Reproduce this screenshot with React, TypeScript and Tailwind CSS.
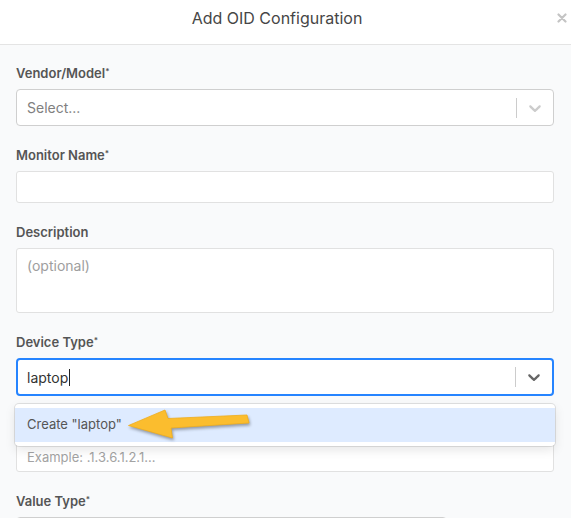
import React from 'react';

const Chevron: React.FC<{ color: string }> = ({ color }) => (
  <svg width="20" height="20" viewBox="0 0 20 20" fill={color} aria-hidden="true">
    <path d="M4.516 7.548c0.436-0.446 1.043-0.481 1.576 0l3.908 3.747 3.908-3.747c0.533-0.481 1.141-0.446 1.574 0 0.436 0.445 0.408 1.197 0 1.615-0.406 0.418-4.695 4.502-4.695 4.502-0.217 0.223-0.502 0.335-0.787 0.335s-0.57-0.112-0.789-0.335c0 0-4.287-4.084-4.695-4.502s-0.436-1.17 0-1.615z" />
  </svg>
);

const Label: React.FC<{ children: React.ReactNode; required?: boolean }> = ({ children, required }) => (
  <label className="block h-5 leading-5 text-[13px] font-semibold text-[#555555] mb-1.5">
    {children}
    {required && <sup className="text-[8px]">*</sup>}
  </label>
);

const App: React.FC = () => {
  return (
    <div className="relative w-[571px] h-[518px] overflow-hidden bg-[#f9fafb] font-['Inter',sans-serif]">
      {/* header */}
      <div className="flex items-center h-[45px] pb-[9px] bg-white border-b border-[#e4e4e4]">
        <h2 className="flex-1 text-center text-[16px] text-[#464646]">Add OID Configuration</h2>
        <button className="w-[15px] h-[15px] mr-[2px] flex items-center justify-center">
          <svg width="10" height="10" viewBox="0 0 10 10" stroke="#c4c4c4" strokeWidth="2.2" strokeLinecap="round">
            <path d="M1.5 1.5l7 7M8.5 1.5l-7 7" />
          </svg>
        </button>
      </div>

      <div className="pl-4 pr-[17px] pt-[18px]">
        <div className="mb-[19px]">
          <Label required>Vendor/Model</Label>
          <div className="flex items-center h-[37px] bg-white border border-[#cfcfcf] rounded">
            <div className="flex-1 pl-[10px] text-[14px] text-[#808080]">Select...</div>
            <span className="w-px h-5 bg-[#cccccc]" />
            <div className="px-2 flex items-center">
              <Chevron color="#cccccc" />
            </div>
          </div>
        </div>

        <div className="mb-[19px]">
          <Label required>Monitor Name</Label>
          <input
            readOnly
            className="block w-full h-[32px] bg-white border border-[#e1e1e1] rounded-[3px] px-[10px] text-[14px] outline-none"
          />
        </div>

        <div className="mb-[19px]">
          <Label>Description</Label>
          <textarea
            readOnly
            placeholder="(optional)"
            className="block w-full h-[65px] resize-none bg-white border border-[#e1e1e1] rounded-[3px] px-[10px] pt-[6px] text-[14px] outline-none placeholder:text-[#9e9e9e]"
          />
        </div>

        <div className="mb-[19px] relative">
          <Label required>Device Type</Label>
          <div className="flex items-center h-[38px] bg-white border-2 border-[#2684ff] rounded">
            <div className="flex-1 pl-[9px] text-[14px] text-[#333333] flex items-center">
              laptop
              <span className="w-px h-[17px] bg-[#222222] ml-px" />
            </div>
            <span className="w-px h-5 bg-[#cccccc]" />
            <div className="px-2 flex items-center">
              <Chevron color="#666666" />
            </div>
          </div>

          {/* dropdown menu */}
          <div className="absolute z-10 left-[-1px] right-[-1px] top-[calc(100%+8px)] bg-white rounded py-1 shadow-[0_0_0_1px_rgba(0,0,0,0.1),0_4px_11px_rgba(0,0,0,0.1)]">
            <div className="h-[34px] flex items-center px-3 bg-[#deebff] text-[13px] text-[#555555]">
              Create "laptop"
            </div>
          </div>
        </div>

        <div className="mb-[19px]">
          <Label required>OID</Label>
          <input
            readOnly
            placeholder="Example: .1.3.6.1.2.1..."
            className="block w-full h-[31px] bg-white border border-[#e1e1e1] rounded-[3px] px-[10px] text-[13px] outline-none placeholder:text-[#a3a3a3]"
          />
        </div>

        <div>
          <Label required>Value Type</Label>
          <div className="w-[431px] h-[37px] bg-white border border-[#cfcfcf] rounded" />
        </div>
      </div>

      {/* annotation arrow */}
      <svg
        className="absolute left-0 top-0 pointer-events-none z-20"
        width="571"
        height="518"
        style={{ filter: 'drop-shadow(1px 2px 1.5px rgba(0,0,0,0.35))' }}
      >
        <polygon
          points="128.5,425.5 165,410 168,418.5 247,415 249,423 171,428 172.5,438"
          fill="#fbbd2e"
          stroke="#f0ad1c"
          strokeWidth="0.8"
          strokeLinejoin="round"
        />
      </svg>
    </div>
  );
};

export default App;
